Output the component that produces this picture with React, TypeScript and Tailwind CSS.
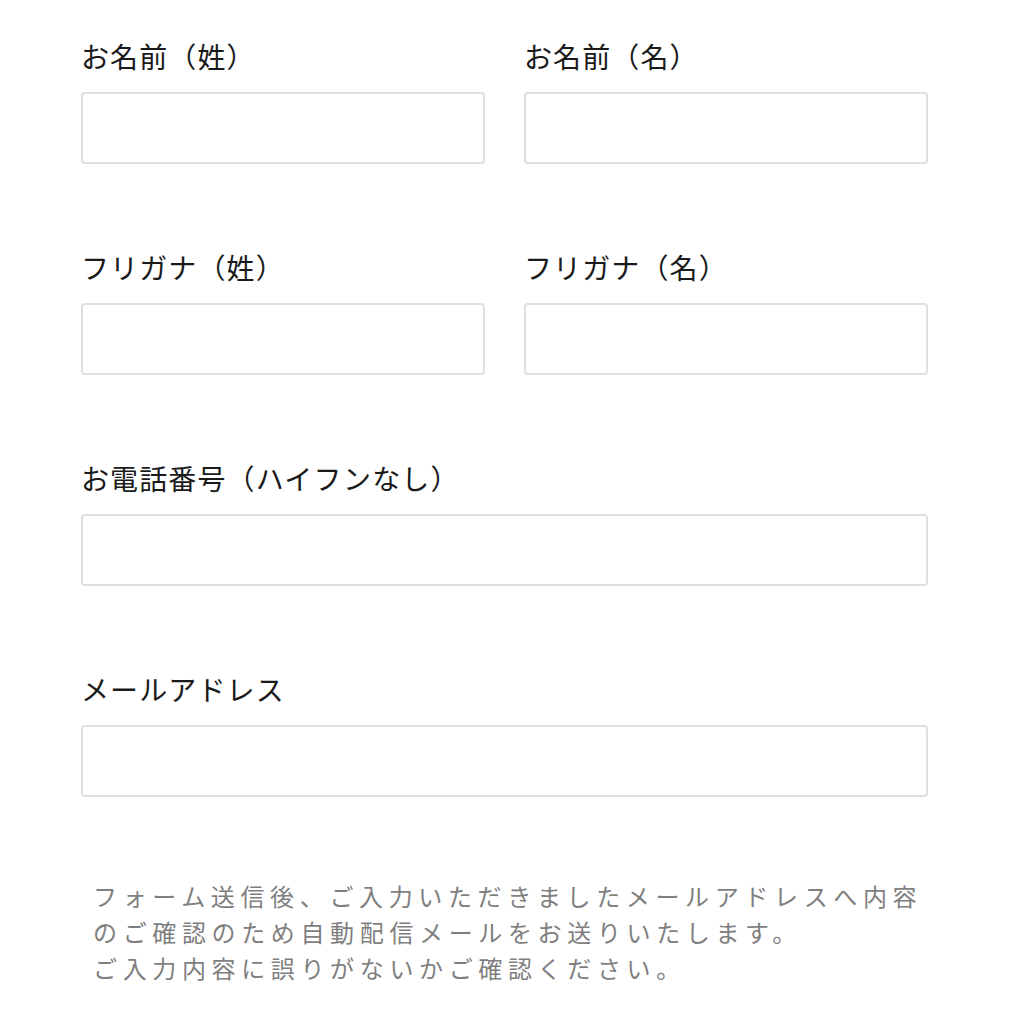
import React from 'react';

const font = { fontFamily: '"Noto Sans CJK JP", "Noto Sans", sans-serif' };

const Field: React.FC<{ label: string }> = ({ label }) => (
  <div className="flex flex-col">
    <label className="text-[28px] leading-[42px] tracking-[0.04em] text-[#1a1a1a] mb-[15px]">{label}</label>
    <input
      type="text"
      className="h-[72px] w-full rounded-[4px] border-2 border-[#dcdfe3] bg-white px-3 outline-none"
    />
  </div>
);

const App: React.FC = () => {
  return (
    <div className="min-h-screen bg-white" style={font}>
      <div className="w-[847px] ml-[81px] pt-[35px] flex flex-col gap-[82px]">
        <div className="grid grid-cols-2 gap-[39px]">
          <Field label="お名前（姓）" />
          <Field label="お名前（名）" />
        </div>
        <div className="grid grid-cols-2 gap-[39px]">
          <Field label="フリガナ（姓）" />
          <Field label="フリガナ（名）" />
        </div>
        <Field label="お電話番号（ハイフンなし）" />
        <Field label="メールアドレス" />
        {/* Notice */}
        <p className="pl-3 -mt-[1px] text-[24px] leading-[36px] tracking-[0.235em] text-[#7f7f7f]">
          フォーム送信後、ご入力いただきましたメールアドレスへ内容のご確認のため自動配信メールをお送りいたします。
          <br />
          ご入力内容に誤りがないかご確認ください。
        </p>
      </div>
    </div>
  );
};

export default App;
